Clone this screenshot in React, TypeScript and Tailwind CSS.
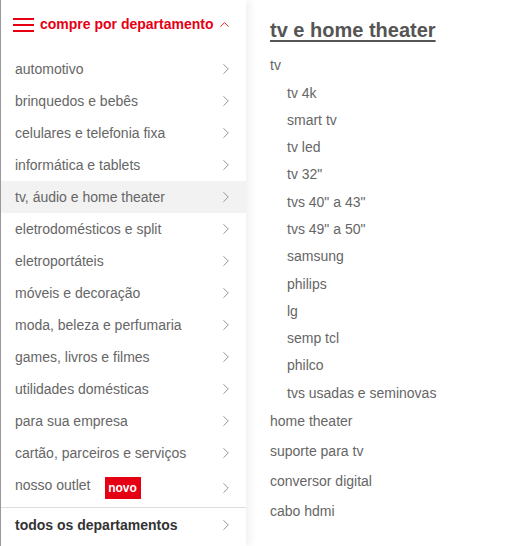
import { ChevronRight, ChevronUp } from "lucide-react";

// #################################
// ### Menu Departamentos
// #################################

const departments = [
  "automotivo",
  "brinquedos e bebês",
  "celulares e telefonia fixa",
  "informática e tablets",
  "tv, áudio e home theater",
  "eletrodomésticos e split",
  "eletroportáteis",
  "móveis e decoração",
  "moda, beleza e perfumaria",
  "games, livros e filmes",
  "utilidades domésticas",
  "para sua empresa",
  "cartão, parceiros e serviços",
];

const tvItems = [
  "tv 4k",
  "smart tv",
  "tv led",
  'tv 32"',
  'tvs 40" a 43"',
  'tvs 49" a 50"',
  "samsung",
  "philips",
  "lg",
  "semp tcl",
  "philco",
  "tvs usadas e seminovas",
];

const otherItems = ["home theater", "suporte para tv", "conversor digital", "cabo hdmi"];

export default function App() {
  return (
    <div
      className="flex h-[546px] w-[520px] bg-white text-[14px] text-[#666]"
      style={{ fontFamily: '"Liberation Sans", Arial, sans-serif' }}
    >
      <aside className="relative z-10 flex w-[246px] shrink-0 flex-col border-l border-[#999] bg-white shadow-[4px_0_8px_rgba(0,0,0,0.06)]">
        <div className="flex h-[53px] items-center pl-3 pb-1">
          <div className="flex w-[21px] flex-col gap-[4px]">
            <span className="block h-[2px] bg-[#e60014]" />
            <span className="block h-[2px] bg-[#e60014]" />
            <span className="block h-[2px] bg-[#e60014]" />
          </div>
          <span className="ml-[6px] font-bold text-[#e60014]">compre por departamento</span>
          <ChevronUp className="ml-[4px] text-[#e60014]" size={15} strokeWidth={1.4} />
        </div>

        {departments.map((d, i) => (
          <div
            key={d}
            className={`flex h-8 items-center justify-between pl-[14px] pr-[11px] ${
              i === 4 ? "bg-[#f2f2f2]" : ""
            }`}
          >
            <span>{d}</span>
            <ChevronRight className="text-[#888]" size={18} strokeWidth={1.2} />
          </div>
        ))}

        <div className="flex h-[39px] items-center justify-between border-b border-[#ddd] pl-[14px] pr-[11px]">
          <div className="flex items-center">
            <span className="-mt-[6px]">nosso outlet</span>
            <span className="ml-[14px] flex h-[22px] w-[36px] items-center justify-center bg-[#e60014] text-[12px] font-bold text-white">
              novo
            </span>
          </div>
          <ChevronRight className="text-[#888]" size={18} strokeWidth={1.2} />
        </div>

        <div className="flex h-[34px] items-center justify-between pl-[14px] pr-[11px]">
          <span className="font-bold text-[#333]">todos os departamentos</span>
          <ChevronRight className="text-[#888]" size={18} strokeWidth={1.2} />
        </div>
      </aside>

      <section className="flex flex-col pl-[24px] pt-[15px]">
        <h2 className="text-[20px] font-bold text-[#555] underline decoration-[2px] underline-offset-[3px]">
          tv e home theater
        </h2>
        <div className="mt-[12px] leading-[16px]">tv</div>
        <ul className="mt-[6px] flex flex-col pl-[17px]">
          {tvItems.map((t) => (
            <li key={t} className="py-[5.65px] leading-[16px]">
              {t}
            </li>
          ))}
        </ul>
        <ul className="flex flex-col">
          {otherItems.map((t) => (
            <li key={t} className="py-[7px] leading-[16px]">
              {t}
            </li>
          ))}
        </ul>
      </section>
    </div>
  );
}
